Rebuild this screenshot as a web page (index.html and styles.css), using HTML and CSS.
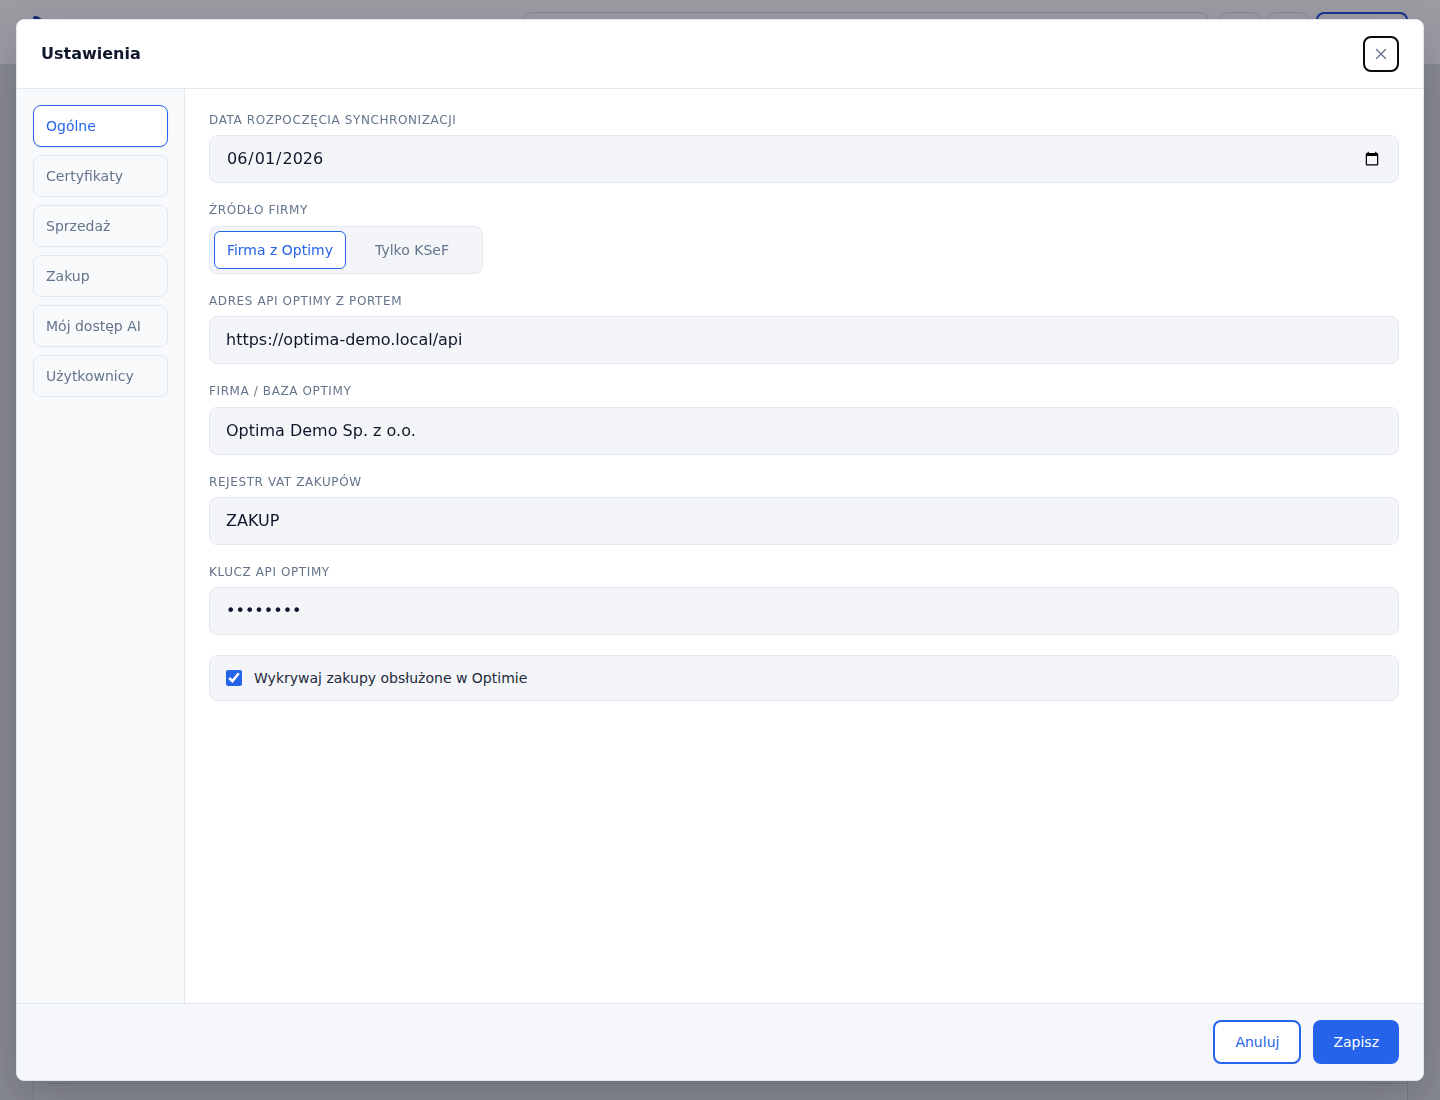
FILE: index.html
```html
<!DOCTYPE html>
<html lang="pl">
<head>
<meta charset="utf-8">
<title>Ustawienia</title>
<link rel="stylesheet" href="styles.css">
</head>
<body>
<div class="page">
  <header class="topbar">
    <div class="logo"></div>
    <div class="search"></div>
    <div class="top-actions">
      <span class="icon-btn"></span>
      <span class="icon-btn"></span>
      <span class="primary-btn"></span>
    </div>
  </header>
  <main class="main">
    <div class="card"><div class="card-row"></div></div>
  </main>
</div>

<div class="overlay"></div>

<div class="modal" role="dialog" aria-labelledby="modal-title">
  <div class="modal-header">
    <h2 id="modal-title" class="modal-title">Ustawienia</h2>
    <button class="close-btn" aria-label="Zamknij">
      <svg width="16" height="16" viewBox="0 0 16 16" fill="none" stroke="currentColor" stroke-width="1.4" stroke-linecap="round"><path d="M3.5 3.5l9 9M12.5 3.5l-9 9"/></svg>
    </button>
  </div>
  <div class="modal-body">
    <nav class="side-nav">
      <button class="nav-item active">Ogólne</button>
      <button class="nav-item">Certyfikaty</button>
      <button class="nav-item">Sprzedaż</button>
      <button class="nav-item">Zakup</button>
      <button class="nav-item">Mój dostęp AI</button>
      <button class="nav-item">Użytkownicy</button>
    </nav>
    <section class="content">
      <div class="field">
        <label class="field-label">Data rozpoczęcia synchronizacji</label>
        <input class="input date-input" type="date" value="2026-06-01">
      </div>
      <div class="field">
        <label class="field-label">Źródło firmy</label>
        <div class="segmented">
          <button class="seg-btn active">Firma z Optimy</button>
          <button class="seg-btn">Tylko KSeF</button>
        </div>
      </div>
      <div class="field">
        <label class="field-label">Adres API Optimy z portem</label>
        <input class="input" type="text" value="https://optima-demo.local/api">
      </div>
      <div class="field">
        <label class="field-label">Firma / baza Optimy</label>
        <input class="input" type="text" value="Optima Demo Sp. z o.o.">
      </div>
      <div class="field">
        <label class="field-label">Rejestr VAT zakupów</label>
        <input class="input" type="text" value="ZAKUP">
      </div>
      <div class="field">
        <label class="field-label">Klucz API Optimy</label>
        <input class="input password" type="password" value="apikey12">
      </div>
      <label class="check-row">
        <input type="checkbox" checked>
        <span>Wykrywaj zakupy obsłużone w Optimie</span>
      </label>
    </section>
  </div>
  <div class="modal-footer">
    <button class="btn btn-outline">Anuluj</button>
    <button class="btn btn-primary">Zapisz</button>
  </div>
</div>
</body>
</html>
```

FILE: styles.css
```css
* { box-sizing: border-box; }

html, body {
  margin: 0;
  height: 100%;
}

body {
  font-family: "DejaVu Sans", sans-serif;
  background: #dfe0e5;
  color: #0f172a;
  overflow: hidden;
}

/* background page */
.page {
  height: 100%;
  display: flex;
  flex-direction: column;
}

.topbar {
  height: 65px;
  background: #ffffff;
  border-bottom: 1px solid #e2e8f0;
  display: flex;
  align-items: flex-start;
  padding: 12px 32px 0 33px;
}

.logo {
  width: 10px;
  height: 10px;
  margin-top: 4px;
  border-radius: 2px 8px 2px 2px;
  background: #1e40af;
}

.search {
  margin-left: 481px;
  width: 684px;
  height: 40px;
  border: 1px solid #d6dae2;
  border-radius: 8px;
}

.top-actions {
  margin-left: 12px;
  display: flex;
  gap: 8px;
}

.icon-btn {
  width: 40px;
  height: 40px;
  border: 1px solid #d6dae2;
  border-radius: 8px;
}

.primary-btn {
  width: 92px;
  height: 40px;
  border: 2px solid #1d4ed8;
  border-radius: 8px;
}

.main {
  flex: 1;
  padding: 18px 32px 0 33px;
  display: flex;
  flex-direction: column;
  justify-content: flex-end;
}

.card {
  height: 40px;
  border: 1px solid #c9ccd4;
  border-bottom: 0;
  background: #e6e7eb;
  margin-bottom: -10px;
  padding-top: 12px;
}

.card-row {
  border-top: 1px solid #c9ccd4;
  margin-left: 14px;
}

.overlay {
  position: fixed;
  inset: 0;
  background: rgba(20, 20, 35, 0.42);
}

/* modal */
.modal {
  position: fixed;
  top: 19px;
  left: 16px;
  width: 1408px;
  height: 1062px;
  background: #ffffff;
  border: 1px solid #e2e8f0;
  border-radius: 8px;
  display: flex;
  flex-direction: column;
  overflow: hidden;
  box-shadow: 0 20px 50px rgba(15, 23, 42, 0.25);
}

.modal-header {
  height: 69px;
  flex: none;
  border-bottom: 1px solid #e2e8f0;
  display: flex;
  align-items: center;
  justify-content: space-between;
  padding: 0 24px 1px 24px;
}

.modal-title {
  margin: 0;
  font-size: 16px;
  font-weight: 700;
  color: #0f172a;
}

.close-btn {
  width: 36px;
  height: 36px;
  border: 2px solid #0b0b0b;
  border-radius: 8px;
  background: #ffffff;
  color: #64748b;
  display: flex;
  align-items: center;
  justify-content: center;
  padding: 0;
}

.modal-body {
  flex: 1;
  display: flex;
  min-height: 0;
}

.side-nav {
  width: 168px;
  flex: none;
  background: #f8fafc;
  border-right: 1px solid #e2e8f0;
  padding: 16px;
  display: flex;
  flex-direction: column;
  gap: 8px;
}

.nav-item {
  height: 42px;
  padding: 0 12px;
  text-align: left;
  font-family: "DejaVu Sans", sans-serif;
  font-size: 14px;
  color: #64748b;
  background: #f8fafc;
  border: 1px solid #e2e8f0;
  border-radius: 8px;
}

.nav-item.active {
  background: #ffffff;
  color: #2563eb;
  border-color: #2563eb;
  box-shadow: 0 1px 2px rgba(15, 23, 42, 0.08);
}

.content {
  flex: 1;
  padding: 24px;
  display: flex;
  flex-direction: column;
  gap: 20px;
}

.field {
  display: flex;
  flex-direction: column;
}

.field-label {
  font-size: 12px;
  line-height: 1.2;
  text-transform: uppercase;
  letter-spacing: 0.6px;
  color: #64748b;
  margin-bottom: 8px;
}

.input {
  height: 48px;
  width: 100%;
  padding: 0 16px 1px 16px;
  background: #f3f5f9;
  border: 1px solid #e2e8f0;
  border-radius: 8px;
  font-family: "DejaVu Sans", sans-serif;
  font-size: 16px;
  color: #0f172a;
  outline: none;
}

.segmented {
  align-self: flex-start;
  display: grid;
  grid-template-columns: 132px 132px;
  height: 48px;
  padding: 4px;
  background: #f3f5f9;
  border: 1px solid #e2e8f0;
  border-radius: 8px;
}

.seg-btn {
  height: 38px;
  font-family: "DejaVu Sans", sans-serif;
  font-size: 14px;
  color: #64748b;
  background: transparent;
  border: 1px solid transparent;
  border-radius: 6px;
  padding: 0;
}

.seg-btn.active {
  background: #ffffff;
  color: #2563eb;
  border-color: #2563eb;
}

.check-row {
  height: 46px;
  display: flex;
  align-items: center;
  gap: 12px;
  padding: 0 16px;
  background: #f3f5f9;
  border: 1px solid #e2e8f0;
  border-radius: 8px;
  font-size: 14px;
  color: #1e293b;
}

.check-row input {
  width: 16px;
  height: 16px;
  margin: 0;
  accent-color: #2563eb;
}

.modal-footer {
  flex: none;
  height: 77px;
  border-top: 1px solid #e2e8f0;
  background: #f5f7fa;
  display: flex;
  justify-content: flex-end;
  align-items: center;
  gap: 12px;
  padding: 0 24px;
}

.btn {
  height: 44px;
  border-radius: 8px;
  font-family: "DejaVu Sans", sans-serif;
  font-size: 14px;
  padding: 0 20px;
}

.btn-outline {
  background: #ffffff;
  color: #2563eb;
  border: 2px solid #2563eb;
}

.btn-primary {
  background: #2563eb;
  color: #ffffff;
  border: 0;
}
```
